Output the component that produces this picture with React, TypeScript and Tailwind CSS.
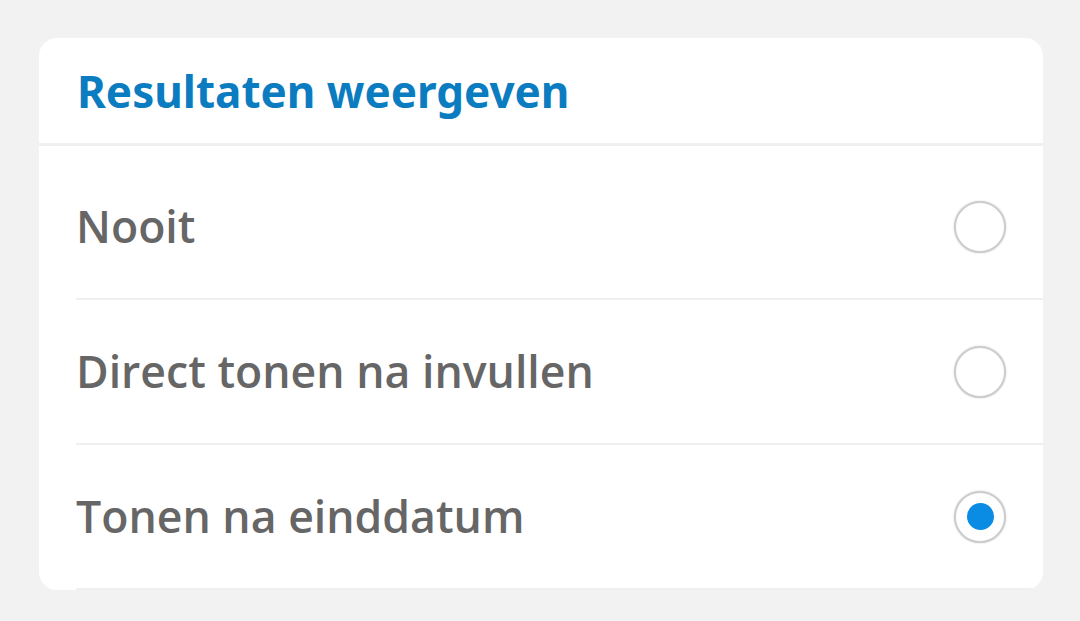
import React, { useState } from "react";

const options = ["Nooit", "Direct tonen na invullen", "Tonen na einddatum"];

const Radio = ({ checked }: { checked: boolean }) => (
  <span className="flex h-[52px] w-[52px] shrink-0 items-center justify-center rounded-full border-2 border-[#cdcdcd] bg-white shadow-[0_0_2px_rgba(0,0,0,0.2)]">
    {checked && <span className="h-[27px] w-[27px] rounded-full bg-[#0a8ce4]" />}
  </span>
);

const App = () => {
  const [selected, setSelected] = useState(2);
  return (
    <div className="min-h-[621px] bg-[#f2f2f2] pt-[38px] pl-[39px] pr-[37px]">
      <div className="overflow-hidden rounded-[18px] bg-white">
        <div className="flex h-[108px] items-center border-b-[3px] border-[#f0f0f0] px-[38px]">
          <h1 className="text-[44px] font-bold leading-none text-[#0a7cbf] [font-family:'Noto_Sans',sans-serif]">
            Resultaten weergeven
          </h1>
        </div>
        <div className="pt-[9px]">
          {options.map((label, i) => (
            <button
              key={label}
              onClick={() => setSelected(i)}
              className="ml-[37px] flex h-[145px] w-[calc(100%-37px)] items-center justify-between border-b-2 border-[#efefef] pr-[37px] text-left"
            >
              <span className="text-[44.6px] font-semibold text-[#666666] [font-family:'Open_Sans',sans-serif]">
                {label}
              </span>
              <Radio checked={selected === i} />
            </button>
          ))}
        </div>
      </div>
    </div>
  );
};

export default App;
